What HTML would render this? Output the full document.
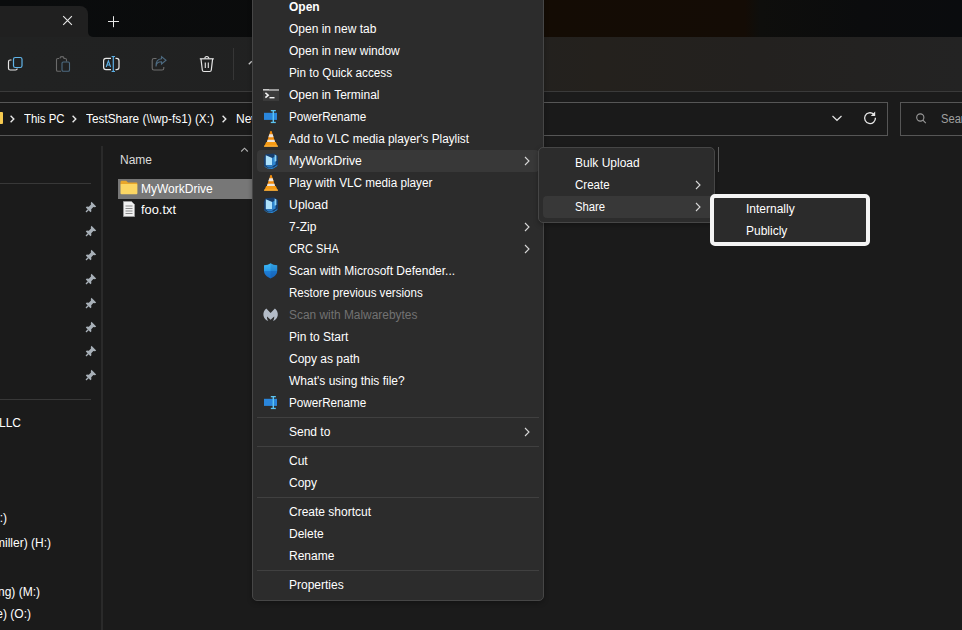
<!DOCTYPE html>
<html><head><meta charset="utf-8">
<style>
*{margin:0;padding:0;box-sizing:border-box}
html,body{width:962px;height:630px;overflow:hidden;background:#1b1b1b;font-family:"Liberation Sans",sans-serif;font-size:12px;color:#fff}
.a{position:absolute}
.t{position:absolute;white-space:nowrap;line-height:14px}
#tabs{left:0;top:0;width:962px;height:37px;background:linear-gradient(90deg,#0a0c0d 0px,#0b0b0b 480px,#140c04 545px,#140c05 745px,#0e0e0c 760px,#0b0c0d 860px,#0a0c0e 962px)}
#tab{left:0;top:6px;width:88px;height:31px;background:#202020;border-top-right-radius:8px}
#tabc{left:88px;top:29px;width:8px;height:8px;background:#202020}
#tabc2{left:88px;top:29px;width:8px;height:8px;background:#0a0c0d;border-bottom-left-radius:5px}
#tool{left:0;top:37px;width:962px;height:54px;background:linear-gradient(90deg,#212222 0px,#212121 400px,#24211d 600px,#23211f 760px,#232323 962px)}
#tline{left:0;top:91px;width:962px;height:1px;background:#3a3a3a}
.box{position:absolute;border:1px solid #565656;background:#1a1a1a}
.sep1{position:absolute;background:#2b2b2b}
.menu{position:absolute;background:#2c2c2c;border:1px solid #464646;border-radius:5px;box-shadow:0 2px 5px rgba(0,0,0,.28)}
.hl{position:absolute;background:#383838;border-radius:4px}
.msep{position:absolute;height:1px;background:#404040}
.chev{position:absolute;width:12px;height:12px}
.dis{color:#727272}
</style></head><body>
<svg width="0" height="0" style="position:absolute">
<defs>
<symbol id="i_term" viewBox="0 0 16 16">
 <rect x="0" y="2" width="16" height="12" fill="#3a3a3a"/>
 <rect x="0" y="2" width="16" height="1.6" fill="#c8c8c8"/>
 <rect x="6" y="2" width="10" height="1.6" fill="#9a9a9a"/>
 <path d="M2.4 5.8L5.2 8.2L2.4 10.6" fill="none" stroke="#f0f0f0" stroke-width="1.6"/>
 <rect x="6.5" y="10" width="5" height="1.4" fill="#f0f0f0"/>
</symbol>
<symbol id="i_pr" viewBox="0 0 16 16">
 <rect x="1" y="3.8" width="13" height="7.1" fill="#2a86dc"/>
 <rect x="9.6" y="1.3" width="1.4" height="12.4" fill="#5cc4f2"/>
 <rect x="7.8" y="1" width="5" height="1.3" fill="#5cc4f2"/>
 <rect x="7.8" y="12.8" width="5" height="1.3" fill="#5cc4f2"/>
</symbol>
<symbol id="i_vlc" viewBox="0 0 16 16">
 <path d="M7.2 0.4C7.6 -0.1 8.4 -0.1 8.8 0.4L12.2 11.5H3.8Z" fill="#f28c0c"/>
 <path d="M6.3 3.2H9.7L10.6 6.2H5.4Z" fill="#ece4dc"/>
 <path d="M4.6 8.8H11.4L12.2 11.6H3.8Z" fill="#ece4dc"/>
 <path d="M3.2 11H12.8L14.8 15.6H1.2Z" fill="#f59a14"/>
 <path d="M1.2 14.6H14.8L15 15.8H1Z" fill="#ffb238"/>
</symbol>
<symbol id="i_mwd" viewBox="0 0 16 16">
 <path d="M2.5 1.2L11 0.6L15 3V12.2L9.5 16L1 13.2L0.8 5Z" fill="#173e6e"/>
 <path d="M1 12.2C3 15 7 16.2 10.5 14.6L14.6 11.8L14 13.2L9.8 15.8C6.5 16.8 2.5 15.5 1 12.2Z" fill="#2c8ad6"/>
 <path d="M2.8 2.2L9.2 5V12.2L2.8 12.2Z" fill="#aee2fb"/>
 <path d="M9.2 5L12.6 3.2V11.4L9.2 13.2Z" fill="#2f87d2"/>
 <path d="M2.8 12.2H9.2V13.2L10.5 14.5L5 14.5Z" fill="#2a7cc6"/>
 <path d="M11.6 1.6L13.4 2.6V8L11.6 8.8Z" fill="#8ed4f5"/>
</symbol>
<symbol id="i_def" viewBox="0 0 16 16">
 <linearGradient id="gdef" x1="0" y1="0" x2="0" y2="1"><stop offset="0" stop-color="#3cbaf6"/><stop offset="0.5" stop-color="#2a9ae8"/><stop offset="0.52" stop-color="#1e7fd6"/><stop offset="1" stop-color="#1a6cc4"/></linearGradient>
 <path d="M7.6 0.2C5.9 1.4 3.8 2 1 2.2V7.8C1 11.3 3.6 13.9 7.6 15.6C11.6 13.9 14.2 11.3 14.2 7.8V2.2C11.4 2 9.3 1.4 7.6 0.2Z" fill="url(#gdef)"/>
 <path d="M7.6 0.2C9.3 1.4 11.4 2 14.2 2.2V7.8C14.2 11.3 11.6 13.9 7.6 15.6Z" fill="#0a3a80" fill-opacity="0.18"/>
</symbol>
<symbol id="i_mb" viewBox="0 0 16 16">
 <path d="M3.3 1.5C1 3.5 0 6 0.5 8.8C1 11.3 2.8 13.2 5.3 14C4.3 12.8 3.8 11.2 4 9.6L7.6 12.8L11.2 9.6C11.4 11.2 10.9 12.8 9.9 14C12.4 13.2 14.2 11.3 14.7 8.8C15.2 6 14.2 3.5 11.9 1.5L7.6 6Z" fill="#b4bcc8"/>
</symbol>
<symbol id="i_pin" viewBox="0 0 14 14">
 <path d="M7.5 1.8L12.2 6.5L11 7.2L9.4 7L7.2 9.2L7.4 11.2L6.5 12.2L1.8 7.5L2.8 6.6L4.8 6.8L7 4.6L6.8 3Z" fill="#a8b0b8"/>
 <path d="M4.2 9.8L2 12" stroke="#a8b0b8" stroke-width="1.3"/>
</symbol>
</defs></svg>


<div id="tabs" class="a"></div>
<div id="tabc" class="a"></div>
<div id="tabc2" class="a"></div>
<div id="tab" class="a"></div>
<!-- tab close x -->
<svg class="a" style="left:62px;top:15px" width="12" height="12" viewBox="0 0 12 12"><path d="M1.2 1.2L9.9 9.9M9.9 1.2L1.2 9.9" stroke="#e8e8e8" stroke-width="1.1"/></svg>
<!-- plus -->
<svg class="a" style="left:107px;top:15px" width="13" height="13" viewBox="0 0 13 13"><path d="M6.5 1.2V12.2M1 6.5H12" stroke="#e8e8e8" stroke-width="1"/></svg>

<div id="tool" class="a"></div>
<div id="tline" class="a"></div>

<!-- toolbar icons -->
<svg class="a" style="left:6px;top:55px" width="18" height="18" viewBox="0 0 18 18">
 <path d="M5.5 5H4.2C3 5 2.5 5.6 2.5 6.8V13.2C2.5 14.4 3.1 15 4.3 15H9.5C10.7 15 11.2 14.5 11.2 13.5" fill="none" stroke="#e6e6e6" stroke-width="1.2"/>
 <rect x="7.5" y="2.5" width="8.5" height="10" rx="1.8" fill="none" stroke="#60b4e8" stroke-width="1.2"/>
</svg>
<svg class="a" style="left:54px;top:55px" width="18" height="18" viewBox="0 0 18 18">
 <path d="M5 3.5H3.8C3 3.5 2.5 4 2.5 4.8V15C2.5 15.8 3 16.3 3.8 16.3H7" fill="none" stroke="#6a6a6a" stroke-width="1.1"/>
 <path d="M6 3.5C6 2.3 6.6 1.6 8 1.6C9.4 1.6 10 2.3 10 3.5H11.2C12 3.5 12.5 4 12.5 4.8V6.5" fill="none" stroke="#6a6a6a" stroke-width="1.1"/>
 <rect x="8" y="7" width="7.5" height="9.3" rx="1.3" fill="none" stroke="#4d6a80" stroke-width="1.1"/>
</svg>
<svg class="a" style="left:102px;top:55px" width="19" height="18" viewBox="0 0 19 18">
 <path d="M9 3.3H4C2.6 3.3 1.6 4.3 1.6 5.7V12.3C1.6 13.7 2.6 14.7 4 14.7H9" fill="none" stroke="#e6e6e6" stroke-width="1.2"/>
 <path d="M13.5 3.3H14.6C16 3.3 17 4.3 17 5.7V12.3C17 13.7 16 14.7 14.6 14.7H13.5" fill="none" stroke="#e6e6e6" stroke-width="1.2"/>
 <path d="M11.3 1.5V16.5M9.6 1.5H13M9.6 16.5H13" fill="none" stroke="#5cb0e6" stroke-width="1.2"/>
 <path d="M4.2 12L6.4 5.8L8.6 12M5 10H7.8" fill="none" stroke="#5cb0e6" stroke-width="1.1"/>
</svg>
<svg class="a" style="left:150px;top:55px" width="18" height="18" viewBox="0 0 18 18">
 <path d="M6.5 3.5H4C2.9 3.5 2.2 4.2 2.2 5.3V13.2C2.2 14.3 2.9 15 4 15H12C13.1 15 13.8 14.3 13.8 13.2V12" fill="none" stroke="#6e6e6e" stroke-width="1.1"/>
 <path d="M6 11.5C6.3 8.3 8.5 6.8 11.5 6.8V9L16 5.2L11.5 1.6V3.8C7.8 4 5.8 6.8 6 11.5Z" fill="none" stroke="#4d6a80" stroke-width="1.1"/>
</svg>
<svg class="a" style="left:198px;top:55px" width="18" height="18" viewBox="0 0 18 18">
 <path d="M1.8 3.8H15.8" stroke="#e6e6e6" stroke-width="1.2"/>
 <path d="M6.8 3.6C6.8 2.4 7.6 1.5 8.8 1.5C10 1.5 10.8 2.4 10.8 3.6" fill="none" stroke="#e6e6e6" stroke-width="1.1"/>
 <path d="M3 4L4.3 15C4.4 16 4.9 16.5 5.9 16.5H11.7C12.7 16.5 13.2 16 13.3 15L14.6 4" fill="none" stroke="#e6e6e6" stroke-width="1.2"/>
 <path d="M7.3 7.5V13M10.3 7.5V13" stroke="#e6e6e6" stroke-width="1.1"/>
</svg>
<div class="a" style="left:233px;top:48px;width:1px;height:32px;background:#363636"></div>
<svg class="a" style="left:248px;top:60px" width="5" height="5" viewBox="0 0 5 5"><path d="M0.8 4.2L3.8 1.2" stroke="#d0d0d0" stroke-width="1.3"/></svg>

<!-- address bar -->
<div class="box" style="left:-2px;top:102px;width:890px;height:34px"></div>
<div class="box" style="left:900px;top:102px;width:80px;height:34px"></div>
<div class="a" style="left:-6px;top:112px;width:9px;height:12px;background:#f5c94f;border-radius:1px"></div>
<svg class="a" style="left:8px;top:114px" width="8" height="10" viewBox="0 0 8 10"><path d="M2.6 1.8L5.8 5L2.6 8.2" fill="none" stroke="#e8e8e8" stroke-width="1.4"/></svg>
<div class="t" style="left:24px;top:112px;transform:scaleX(0.951);transform-origin:0 0">This PC</div>
<svg class="a" style="left:70px;top:114px" width="8" height="10" viewBox="0 0 8 10"><path d="M2.6 1.8L5.8 5L2.6 8.2" fill="none" stroke="#e8e8e8" stroke-width="1.4"/></svg>
<div class="t" style="left:86px;top:112px;transform:scaleX(0.984);transform-origin:0 0">TestShare (\\wp-fs1) (X:)</div>
<svg class="a" style="left:220px;top:114px" width="8" height="10" viewBox="0 0 8 10"><path d="M2.6 1.8L5.8 5L2.6 8.2" fill="none" stroke="#e8e8e8" stroke-width="1.4"/></svg>
<div class="t" style="left:236px;top:112px">New</div>
<svg class="a" style="left:831px;top:114px" width="12" height="8" viewBox="0 0 12 8"><path d="M1.5 2L6 6.3L10.5 2" fill="none" stroke="#e0e0e0" stroke-width="1.2"/></svg>
<svg class="a" style="left:858px;top:106px" width="24" height="24" viewBox="0 0 24 24"><path d="M15.6 8.1A5.4 5.4 0 1 0 17.4 11.7" fill="none" stroke="#e6e6e6" stroke-width="1.3"/><path d="M17.2 5.6V10H12.8Z" fill="#e6e6e6"/></svg>
<svg class="a" style="left:913px;top:111px" width="14" height="14" viewBox="0 0 14 14"><circle cx="7.3" cy="6.5" r="3.6" fill="none" stroke="#9a9a9a" stroke-width="1.1"/><path d="M9.9 9.1L12.8 12.2" stroke="#9a9a9a" stroke-width="1.1"/></svg>
<div class="t" style="left:941px;top:112px;color:#a0a0a0;transform:scaleX(0.93);transform-origin:0 0">Search</div>

<!-- nav pane -->
<div class="a" style="left:101px;top:146px;width:2px;height:484px;background:#2a2a2a"></div>
<div class="a" style="left:0;top:183px;width:91px;height:1px;background:#383838"></div>
<div class="a" style="left:0;top:399px;width:91px;height:1px;background:#383838"></div>
<svg class="a" style="left:84px;top:200px" width="14" height="14"><use href="#i_pin"/></svg>
<svg class="a" style="left:84px;top:224px" width="14" height="14"><use href="#i_pin"/></svg>
<svg class="a" style="left:84px;top:248px" width="14" height="14"><use href="#i_pin"/></svg>
<svg class="a" style="left:84px;top:272px" width="14" height="14"><use href="#i_pin"/></svg>
<svg class="a" style="left:84px;top:296px" width="14" height="14"><use href="#i_pin"/></svg>
<svg class="a" style="left:84px;top:320px" width="14" height="14"><use href="#i_pin"/></svg>
<svg class="a" style="left:84px;top:344px" width="14" height="14"><use href="#i_pin"/></svg>
<svg class="a" style="left:84px;top:368px" width="14" height="14"><use href="#i_pin"/></svg>
<div class="t" style="right:941px;top:416px">LLC</div>
<div class="t" style="right:955px;top:511px">(G:)</div>
<div class="t" style="right:911px;top:536px">Smiller) (H:)</div>
<div class="t" style="right:922px;top:585px">ing) (M:)</div>
<div class="t" style="right:931px;top:607px">ive) (O:)</div>

<!-- content header -->
<div class="t" style="left:120px;top:153px;color:#dcdcdc">Name</div>
<svg class="a" style="left:240px;top:146px" width="9" height="7" viewBox="0 0 9 7"><path d="M1.2 5.5L4.5 2.2L7.8 5.5" fill="none" stroke="#b0b0b0" stroke-width="1.1"/></svg>
<div class="a" style="left:718px;top:147px;width:1px;height:25px;background:#5e5e5e"></div>

<!-- selected row -->
<div class="a" style="left:118px;top:179px;width:140px;height:20px;background:#777777"></div>
<svg class="a" style="left:120px;top:180px" width="18" height="15" viewBox="0 0 18 15">
 <path d="M0.5 2.2C0.5 1.2 1.1 0.7 2 0.7H6.2L8 2.4H16C16.9 2.4 17.4 2.9 17.4 3.8V5H0.5Z" fill="#e8a62a"/>
 <rect x="0.5" y="4" width="16.9" height="10.2" rx="1" fill="#fbd664"/>
</svg>
<div class="t" style="left:141px;top:182px">MyWorkDrive</div>
<svg class="a" style="left:122px;top:201px" width="14" height="16" viewBox="0 0 14 16">
 <path d="M1.5 0.5H9.5L12.5 3.5V15.5H1.5Z" fill="#f0f0f0" stroke="#9a9a9a" stroke-width="1"/>
 <path d="M3.5 5H10.5M3.5 7.5H10.5M3.5 10H10.5M3.5 12.5H10.5" stroke="#6a6a6a" stroke-width="0.75"/>
</svg>
<div class="t" style="left:141px;top:203px;transform:scaleX(1.07);transform-origin:0 0">foo.txt</div>

<!-- main context menu -->
<div class="menu" style="left:252px;top:-9px;width:292px;height:610px"></div>
<div class="t" style="left:289px;top:0px;font-weight:bold;">Open</div>
<div class="t" style="left:289px;top:22px;">Open in new tab</div>
<div class="t" style="left:289px;top:44px;">Open in new window</div>
<div class="t" style="left:289px;top:66px;transform:scaleX(0.9778);transform-origin:0 0;">Pin to Quick access</div>
<div class="t" style="left:289px;top:88px;">Open in Terminal</div>
<svg class="a" style="left:263px;top:87px" width="16" height="16"><use href="#i_term"/></svg>
<div class="t" style="left:289px;top:110px;transform:scaleX(0.9742);transform-origin:0 0;">PowerRename</div>
<svg class="a" style="left:263px;top:109px" width="16" height="16"><use href="#i_pr"/></svg>
<div class="t" style="left:289px;top:132px;transform:scaleX(0.9835);transform-origin:0 0;">Add to VLC media player's Playlist</div>
<svg class="a" style="left:263px;top:131px" width="16" height="16"><use href="#i_vlc"/></svg>
<div class="hl" style="left:257px;top:150px;width:282px;height:22px"></div>
<div class="t" style="left:289px;top:154px;transform:scaleX(1.0142);transform-origin:0 0;">MyWorkDrive</div>
<svg class="a" style="left:263px;top:153px" width="16" height="16"><use href="#i_mwd"/></svg>
<svg class="a" style="left:522px;top:155px" width="10" height="12" viewBox="0 0 10 12"><path d="M3 2L7 6L3 10" fill="none" stroke="#d8d8d8" stroke-width="1.1"/></svg>
<div class="t" style="left:289px;top:176px;transform:scaleX(0.9773);transform-origin:0 0;">Play with VLC media player</div>
<svg class="a" style="left:263px;top:175px" width="16" height="16"><use href="#i_vlc"/></svg>
<div class="t" style="left:289px;top:198px;transform:scaleX(1.0274);transform-origin:0 0;">Upload</div>
<svg class="a" style="left:263px;top:197px" width="16" height="16"><use href="#i_mwd"/></svg>
<div class="t" style="left:289px;top:220px;">7-Zip</div>
<svg class="a" style="left:522px;top:221px" width="10" height="12" viewBox="0 0 10 12"><path d="M3 2L7 6L3 10" fill="none" stroke="#d8d8d8" stroke-width="1.1"/></svg>
<div class="t" style="left:289px;top:242px;transform:scaleX(0.9238);transform-origin:0 0;">CRC SHA</div>
<svg class="a" style="left:522px;top:243px" width="10" height="12" viewBox="0 0 10 12"><path d="M3 2L7 6L3 10" fill="none" stroke="#d8d8d8" stroke-width="1.1"/></svg>
<div class="t" style="left:289px;top:264px;">Scan with Microsoft Defender...</div>
<svg class="a" style="left:263px;top:263px" width="16" height="16"><use href="#i_def"/></svg>
<div class="t" style="left:289px;top:286px;transform:scaleX(0.9636);transform-origin:0 0;">Restore previous versions</div>
<div class="t" style="left:289px;top:308px;color:#727272;transform:scaleX(0.9922);transform-origin:0 0;">Scan with Malwarebytes</div>
<svg class="a" style="left:263px;top:307px" width="16" height="16"><use href="#i_mb"/></svg>
<div class="t" style="left:289px;top:330px;">Pin to Start</div>
<div class="t" style="left:289px;top:352px;">Copy as path</div>
<div class="t" style="left:289px;top:374px;">What's using this file?</div>
<div class="t" style="left:289px;top:396px;transform:scaleX(0.9742);transform-origin:0 0;">PowerRename</div>
<svg class="a" style="left:263px;top:395px" width="16" height="16"><use href="#i_pr"/></svg>
<div class="msep" style="left:257px;top:417px;width:282px"></div>
<div class="t" style="left:289px;top:425px;">Send to</div>
<svg class="a" style="left:522px;top:426px" width="10" height="12" viewBox="0 0 10 12"><path d="M3 2L7 6L3 10" fill="none" stroke="#d8d8d8" stroke-width="1.1"/></svg>
<div class="msep" style="left:257px;top:446px;width:282px"></div>
<div class="t" style="left:289px;top:454px;">Cut</div>
<div class="t" style="left:289px;top:476px;">Copy</div>
<div class="msep" style="left:257px;top:497px;width:282px"></div>
<div class="t" style="left:289px;top:505px;">Create shortcut</div>
<div class="t" style="left:289px;top:527px;">Delete</div>
<div class="t" style="left:289px;top:549px;">Rename</div>
<div class="msep" style="left:257px;top:570px;width:282px"></div>
<div class="t" style="left:289px;top:578px;">Properties</div>
<!-- submenu 1 -->
<div class="menu" style="left:538px;top:147px;width:177px;height:76px"></div>
<div class="hl" style="left:543px;top:196px;width:171px;height:22px"></div>
<div class="t" style="left:575px;top:156px">Bulk Upload</div>
<div class="t" style="left:575px;top:178px;transform:scaleX(0.96);transform-origin:0 0">Create</div>
<svg class="a" style="left:693px;top:179px" width="10" height="12" viewBox="0 0 10 12"><path d="M3 2L7 6L3 10" fill="none" stroke="#d8d8d8" stroke-width="1.1"/></svg>
<div class="t" style="left:575px;top:200px;transform:scaleX(0.94);transform-origin:0 0">Share</div>
<svg class="a" style="left:693px;top:201px" width="10" height="12" viewBox="0 0 10 12"><path d="M3 2L7 6L3 10" fill="none" stroke="#d8d8d8" stroke-width="1.1"/></svg>

<!-- submenu 2 -->
<div class="a" style="left:710px;top:194px;width:160px;height:52px;border:4px solid #f4f4f4;border-radius:5px;background:#2b2b2b"></div>
<div class="t" style="left:746px;top:202px">Internally</div>
<div class="t" style="left:746px;top:224px">Publicly</div>
</body></html>
